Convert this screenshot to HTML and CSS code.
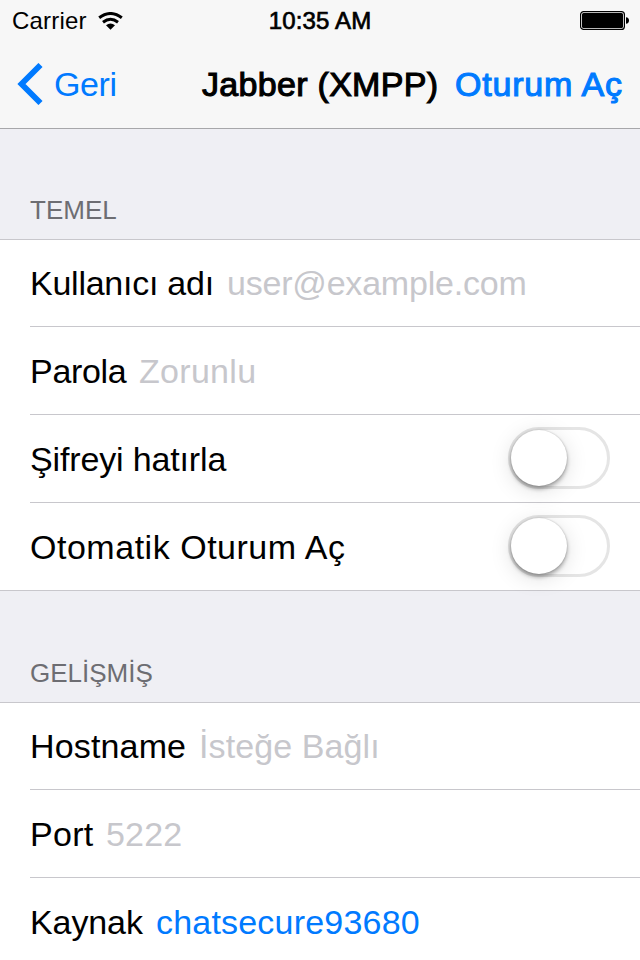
FILE: index.html
```html
<!DOCTYPE html>
<html lang="tr">
<head>
<meta charset="utf-8">
<title>Jabber (XMPP)</title>
<link rel="stylesheet" href="styles.css">
</head>
<body>
<header class="top">
  <div class="status">
    <div class="carrier"><span class="carrier-name">Carrier</span>
      <svg class="wifi" width="26" height="18" viewBox="0 0 26 18"><g fill="none" stroke="#000" stroke-width="3"><path d="M1.2 5.8Q12.5-2.8 23.8 5.8"/><path d="M5 10.2Q12.5 4.4 20 10.2"/></g><path d="M8 13.2Q12.5 9.8 17 13.2L12.5 17.8Z"/></svg>
    </div>
    <div class="time">10:35 AM</div>
    <div class="power"><svg width="50" height="20" viewBox="0 0 50 20"><rect x=".6" y=".6" width="43.8" height="17.8" rx="3" fill="none" stroke="#000" stroke-width="1.2"/><rect x="2" y="2" width="41" height="15" rx="1.5"/><path d="M46 6.2Q49 6.5 49 9.5T46 12.8Z"/></svg></div>
  </div>
  <nav class="nav">
    <a class="back"><svg width="26" height="42" viewBox="0 0 26 42"><path d="M23.5 2 4.5 21 23.5 40" fill="none" stroke="#007aff" stroke-width="5.8"/></svg><span class="back-text">Geri</span></a>
    <h1 class="title">Jabber (XMPP)</h1>
    <a class="login">Oturum Aç</a>
  </nav>
</header>
<main>
  <h2 class="heading">TEMEL</h2>
  <section class="group">
    <div class="row"><span class="label username">Kullanıcı adı</span><span class="hint email">user@example.com</span></div>
    <div class="row"><span class="label password">Parola</span><span class="hint required">Zorunlu</span></div>
    <div class="row"><span class="label remember">Şifreyi hatırla</span><span class="switch"><span class="knob"></span></span></div>
    <div class="row last"><span class="label auto">Otomatik Oturum Aç</span><span class="switch"><span class="knob"></span></span></div>
  </section>
  <h2 class="heading advanced">GELİŞMİŞ</h2>
  <section class="group">
    <div class="row"><span class="label host">Hostname</span><span class="hint optional">İsteğe Bağlı</span></div>
    <div class="row"><span class="label port">Port</span><span class="hint number">5222</span></div>
    <div class="row"><span class="label resource">Kaynak</span><span class="value">chatsecure93680</span></div>
  </section>
</main>
</body>
</html>
```
FILE: styles.css
```css
* { box-sizing: border-box; }
body { margin: 0; width: 640px; height: 960px; overflow: hidden; background: #efeff4; color: #000; font-family: "Liberation Sans", Arial, sans-serif; font-size: 34px; line-height: 38px; white-space: nowrap; }
.top { height: 129px; background: #f7f7f7; border-bottom: 1px solid #a7a7aa; }
.status { display: grid; grid-template-columns: 1fr auto 1fr; height: 40px; align-items: center; font-size: 24px; padding: 1px 10px 0 12px; }
.carrier { display: flex; align-items: center; gap: 11px; }
.carrier-name { letter-spacing: .2px; }
.time { margin-right: 2px; letter-spacing: .15px; -webkit-text-stroke: .7px #000; }
.power { display: flex; justify-content: flex-end; }
.nav { display: flex; align-items: center; height: 88px; }
.back { display: flex; align-items: center; width: 202px; padding-left: 17px; gap: 11px; color: #007aff; }
.back-text { letter-spacing: -.4px; }
.title { margin: 0; width: 253px; font-size: 34px; font-weight: 400; letter-spacing: .3px; -webkit-text-stroke: 1.1px #000; }
.login { color: #007aff; letter-spacing: .8px; -webkit-text-stroke: 1.1px #007aff; }
.heading { margin: 0; height: 110px; padding: 66px 0 0 30px; font-size: 26px; line-height: 30px; font-weight: 400; color: #6d6d72; }
.advanced { height: 111px; padding-top: 67px; }
.group { background: #fff; border-top: 1px solid #c8c7cc; }
.row { display: flex; align-items: center; height: 88px; margin-left: 30px; padding-right: 30px; border-bottom: 1px solid #c8c7cc; }
.row:first-child { height: 87px; }
.last { margin-left: 0; padding-left: 30px; }
.hint { color: #c7c7cc; }
.value { color: #007aff; letter-spacing: .2px; }
.username { width: 197px; letter-spacing: -.25px; }
.email { letter-spacing: -.2px; }
.password { width: 109px; letter-spacing: -.3px; }
.required { letter-spacing: .3px; }
.remember { letter-spacing: -.15px; }
.auto { letter-spacing: .52px; }
.host { width: 169px; letter-spacing: .15px; }
.optional { letter-spacing: .1px; }
.port { width: 76px; letter-spacing: .3px; }
.number { letter-spacing: .2px; }
.resource { width: 126px; letter-spacing: -.1px; }
.switch { margin: 0 0 2px auto; width: 102px; height: 62px; border: 3px solid #e5e5e5; border-radius: 31px; }
.knob { display: block; width: 56px; height: 56px; border-radius: 50%; background: #fff; box-shadow: 0 3px 4px rgba(0,0,0,.32), 0 4px 22px rgba(0,0,0,.13), 0 0 2px rgba(0,0,0,.2); }
```
